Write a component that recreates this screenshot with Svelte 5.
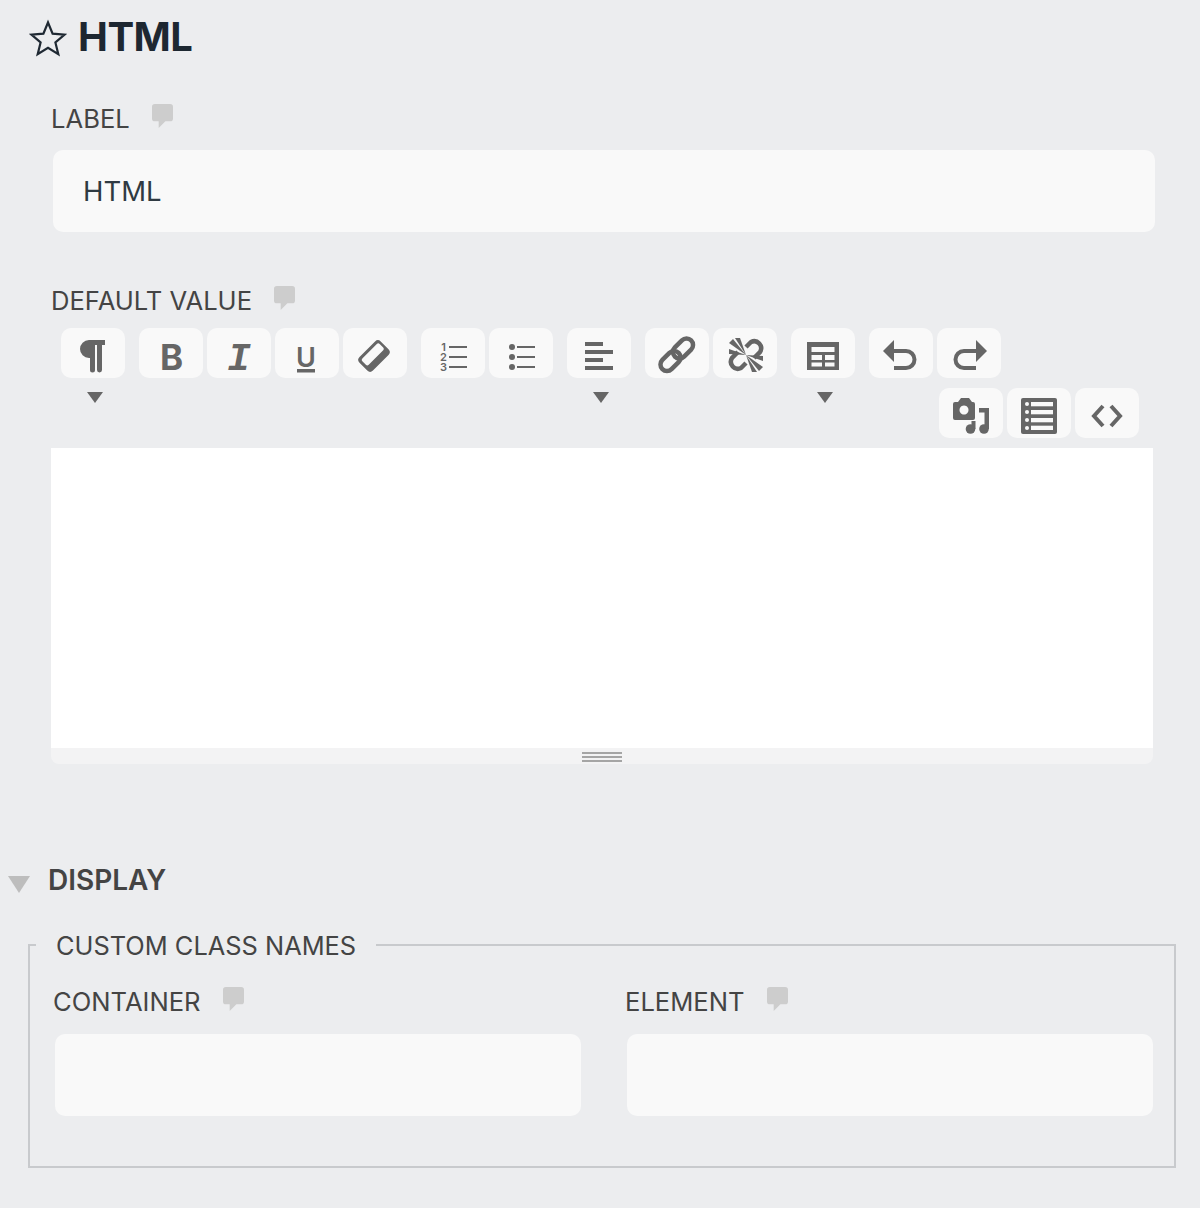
<script>
  const fanA = [
    '33,27 22,10 27,10',
    '33,27 16,15 20,11',
    '33,27 16,21 16,26'
  ]
  const fanB = [
    '33,27 44,44 39,44',
    '33,27 50,39 46,43',
    '33,27 50,33 50,28'
  ]
</script>

{#snippet bubble()}
  <svg class="bubble" width="21" height="25" viewBox="0 0 22 26">
    <path d="M3 0H19a3 3 0 0 1 3 3V15a3 3 0 0 1-3 3H14L7 25V18H3a3 3 0 0 1-3-3V3a3 3 0 0 1 3-3z" />
  </svg>
{/snippet}

{#snippet arrow()}
  <span class="drop"></span>
{/snippet}

<div class="page">
  <h1 class="title">
    <svg width="38" height="38" viewBox="0 0 38 38">
      <path d="M19 3.5l4.6 11.2 12 .9-9.2 7.8 2.9 11.8L19 28.8 8.700 35.200l2.900-11.800-9.200-7.800 12-.9z" fill="none" stroke="#1f2933" stroke-width="2.200" />
    </svg>
    HTML
  </h1>

  <div class="field top">
    <div class="lab">LABEL {@render bubble()}</div>
    <div class="input big">HTML</div>
  </div>

  <div class="field value">
    <div class="lab">DEFAULT VALUE {@render bubble()}</div>
    <div class="toolbar">
      <div class="row">
        <div class="group">
          <button class="btn">
            <svg viewBox="0 0 64 50"><path d="M28 12H44V17H41V42a2.500 2.500 0 0 1-5 0V17H34V42a2.500 2.500 0 0 1-5 0V30H28a9 9 0 0 1 0-18z" /></svg>
            {@render arrow()}
          </button>
        </div>
        <div class="group">
          <button class="btn"><svg viewBox="0 0 64 50"><text x="32.500" y="42" text-anchor="middle" class="t-b">B</text></svg></button>
          <button class="btn"><svg viewBox="0 0 64 50"><text x="32" y="42" text-anchor="middle" class="t-i">I</text></svg></button>
          <button class="btn">
            <svg viewBox="0 0 64 50"><text x="31" y="39" text-anchor="middle" class="t-u">U</text><rect x="22" y="41" width="18" height="3.500" /></svg>
          </button>
          <button class="btn">
            <svg viewBox="0 0 64 50">
              <g transform="translate(31 28) rotate(-45)">
                <rect x="-15" y="-9.500" width="30" height="19" rx="4" />
                <rect x="-12" y="-6.500" width="24.500" height="9" rx="2" fill="#f9f9f9" />
              </g>
            </svg>
          </button>
        </div>
        <div class="group">
          <button class="btn">
            <svg viewBox="0 0 64 50">
              <text x="22.500" y="23" text-anchor="middle" class="t-n">1</text>
              <text x="22.500" y="33" text-anchor="middle" class="t-n">2</text>
              <text x="22.500" y="43" text-anchor="middle" class="t-n">3</text>
              <rect x="28" y="18" width="18" height="2" /><rect x="28" y="28" width="18" height="2" /><rect x="28" y="38" width="18" height="2" />
            </svg>
          </button>
          <button class="btn">
            <svg viewBox="0 0 64 50">
              <circle cx="23" cy="19" r="3" /><circle cx="23" cy="29" r="3" /><circle cx="23" cy="39" r="3" />
              <rect x="28" y="18" width="18" height="2" /><rect x="28" y="28" width="18" height="2" /><rect x="28" y="38" width="18" height="2" />
            </svg>
          </button>
        </div>
        <div class="group">
          <button class="btn">
            <svg viewBox="0 0 64 50">
              <rect x="18" y="14" width="18" height="4" /><rect x="18" y="22" width="28" height="4" />
              <rect x="18" y="30" width="18" height="4" /><rect x="18" y="38" width="28" height="4" />
            </svg>
            {@render arrow()}
          </button>
        </div>
        <div class="group">
          <button class="btn">
            <svg viewBox="0 0 64 50">
              <g fill="none" stroke="#666" stroke-width="4.500">
                <rect x="-11.500" y="-6.500" width="23" height="13" rx="6.500" transform="translate(38 20.500) rotate(-45)" />
                <rect x="-11.500" y="-6.500" width="23" height="13" rx="6.500" transform="translate(25.500 33) rotate(-45)" />
              </g>
            </svg>
          </button>
          <button class="btn">
            <svg viewBox="0 0 64 50">
              <path d="M33 19L38 14A7 7 0 0 1 47 24L41 30M33 35L28 40A7 7 0 0 1 19 30L25 24" fill="none" stroke="#666" stroke-width="4.500" />
              {#each fanA as p}<polygon points={p} />{/each}
              {#each fanB as p}<polygon points={p} />{/each}
            </svg>
          </button>
        </div>
        <div class="group">
          <button class="btn">
            <svg viewBox="0 0 64 50">
              <path fill-rule="evenodd" d="M16 14H48V42H16zM20.500 19V24H43.500V19zM20.500 27V32H31V27zM34 27V32H43.500V27zM20.500 34.500V38.500H31V34.500zM34 34.500V38.500H43.500V34.500z" />
            </svg>
            {@render arrow()}
          </button>
        </div>
        <div class="group">
          <button class="btn">
            <svg viewBox="0 0 64 50">
              <path d="M14 23L25 12V34z" />
              <path d="M24 23H37a8 8 0 0 1 0 17H25" fill="none" stroke="#666" stroke-width="4" />
            </svg>
          </button>
          <button class="btn">
            <svg viewBox="0 0 64 50">
              <path d="M50 23L39 12V34z" />
              <path d="M40 23H27a8 8 0 0 0 0 17H39" fill="none" stroke="#666" stroke-width="4" />
            </svg>
          </button>
        </div>
      </div>
      <div class="row second">
        <div class="group">
          <button class="btn">
            <svg viewBox="0 0 64 50">
              <path fill-rule="evenodd" d="M19 14L22 10H30L33 14H34a2 2 0 0 1 2 2V30a2 2 0 0 1-2 2H16a2 2 0 0 1-2-2V16a2 2 0 0 1 2-2zM25 17.500a4.500 4.500 0 1 0 .01 0z" />
              <circle cx="31.500" cy="41" r="4.800" />
              <circle cx="45" cy="41" r="4.800" />
              <path d="M40 20H50V41H45.500V24.500H40z" />
              <rect x="32.500" y="33" width="4" height="8" />
            </svg>
          </button>
          <button class="btn">
            <svg viewBox="0 0 64 50">
              <rect x="14" y="10" width="36" height="36" rx="2" />
              <g fill="#f9f9f9">
                <circle cx="20" cy="16" r="2" /><circle cx="20" cy="24" r="2" /><circle cx="20" cy="32" r="2" /><circle cx="20" cy="40" r="2" />
                <rect x="24" y="14" width="22" height="4.300" /><rect x="24" y="22" width="22" height="4.300" />
                <rect x="24" y="30" width="22" height="4.300" /><rect x="24" y="37.700" width="22" height="4.300" />
              </g>
            </svg>
          </button>
          <button class="btn">
            <svg viewBox="0 0 64 50">
              <path d="M28 18L19 28L28 38M36 18L45 28L36 38" fill="none" stroke="#666" stroke-width="4" />
            </svg>
          </button>
        </div>
      </div>
    </div>
    <div class="editor"></div>
    <div class="grip"><span></span></div>
  </div>

  <div class="section">
    <span class="tri"></span>
    <h2>DISPLAY</h2>
  </div>

  <fieldset class="box">
    <legend>CUSTOM CLASS NAMES</legend>
    <div class="cols">
      <div class="col">
        <div class="lab">CONTAINER {@render bubble()}</div>
        <div class="input"></div>
      </div>
      <div class="col">
        <div class="lab">ELEMENT {@render bubble()}</div>
        <div class="input"></div>
      </div>
    </div>
  </fieldset>
</div>

<style>
  :global(body) {
    background: #ecedef;
  }
  .page {
    height: 1208px;
    overflow: hidden;
    box-sizing: border-box;
    padding-top: 10px;
    font-family: Inter, "Liberation Sans", sans-serif;
    color: #444;
  }
  .title {
    display: flex;
    align-items: center;
    gap: 11px;
    margin: 0 0 0 29px;
    height: 52px;
    font-size: 40px;
    font-weight: 700;
    letter-spacing: -0.5px;
    color: #1d2731;
  }
  .title svg {
    margin-top: 4px;
  }
  .field {
    margin-left: 51px;
    width: 1104px;
  }
  .top {
    margin-top: 42px;
  }
  .value {
    margin-top: 54px;
  }
  .lab {
    display: flex;
    align-items: center;
    height: 30px;
    font-size: 25.600px;
    line-height: 30px;
    color: #444;
  }
  .bubble {
    margin: -6px 0 0 22px;
    fill: #cdcdcd;
  }
  .input {
    box-sizing: border-box;
    height: 82px;
    background: #f9f9f9;
    border-radius: 10px;
    color: #2f3a42;
    font-size: 27.500px;
    line-height: 82px;
  }
  .big {
    margin: 16px 0 0 2px;
    padding-left: 30px;
    width: 1102px;
  }
  .toolbar {
    margin-top: 12px;
    height: 120px;
    padding-left: 10px;
  }
  .row {
    display: flex;
    gap: 14px;
  }
  .second {
    justify-content: flex-end;
    margin-top: 10px;
    padding-right: 16px;
  }
  .group {
    display: flex;
    gap: 4px;
  }
  .btn {
    position: relative;
    width: 64px;
    height: 50px;
    padding: 0;
    border: 0;
    border-radius: 10px;
    background: #f9f9f9;
  }
  .btn svg {
    display: block;
    width: 64px;
    height: 50px;
    fill: #666;
    overflow: visible;
  }
  .t-b {
    font: 700 35px Inter, sans-serif;
  }
  .t-i {
    font: italic 700 39px "Liberation Mono", monospace;
  }
  .t-u {
    font: 600 27px Inter, sans-serif;
  }
  .t-n {
    font: 600 11px Inter, sans-serif;
  }
  .drop {
    position: absolute;
    left: 26px;
    top: 64px;
    width: 0;
    height: 0;
    border-style: solid;
    border-width: 11px 8px 0;
    border-color: #666 transparent transparent;
  }
  .editor {
    width: 1102px;
    height: 300px;
    background: #fff;
  }
  .grip {
    display: flex;
    justify-content: center;
    width: 1102px;
    height: 16px;
    background: #f3f3f4;
    border-radius: 0 0 8px 8px;
  }
  .grip span {
    box-sizing: border-box;
    width: 40px;
    height: 10px;
    margin-top: 4px;
    background: linear-gradient(#a5a5a5 0 2px, transparent 2px 4px, #a5a5a5 4px 6px, transparent 6px 8px, #a5a5a5 8px 10px);
  }
  .section {
    display: flex;
    align-items: center;
    margin: 96px 0 0 8px;
    height: 40px;
  }
  .tri {
    width: 0;
    height: 0;
    margin-top: 8px;
    border-style: solid;
    border-width: 17px 11px 0;
    border-color: #bdbdbd transparent transparent;
  }
  h2 {
    margin: 0 0 0 18px;
    font-size: 28px;
    font-weight: 600;
    color: #444;
  }
  .box {
    box-sizing: border-box;
    width: 1148px;
    height: 239px;
    margin: 29px 0 0 28px;
    padding: 0 21px 0 23px;
    border: 2px solid #c8cacd;
    border-radius: 0;
  }
  legend {
    margin-left: -17px;
    padding: 2px 20px 0;
    font-size: 25.400px;
    line-height: 30px;
    color: #444;
  }
  .cols {
    display: grid;
    grid-template-columns: 1fr 1fr;
    column-gap: 44px;
    margin-top: 26px;
  }
  .col .input {
    margin: 17px 0 0 2px;
  }
</style>
